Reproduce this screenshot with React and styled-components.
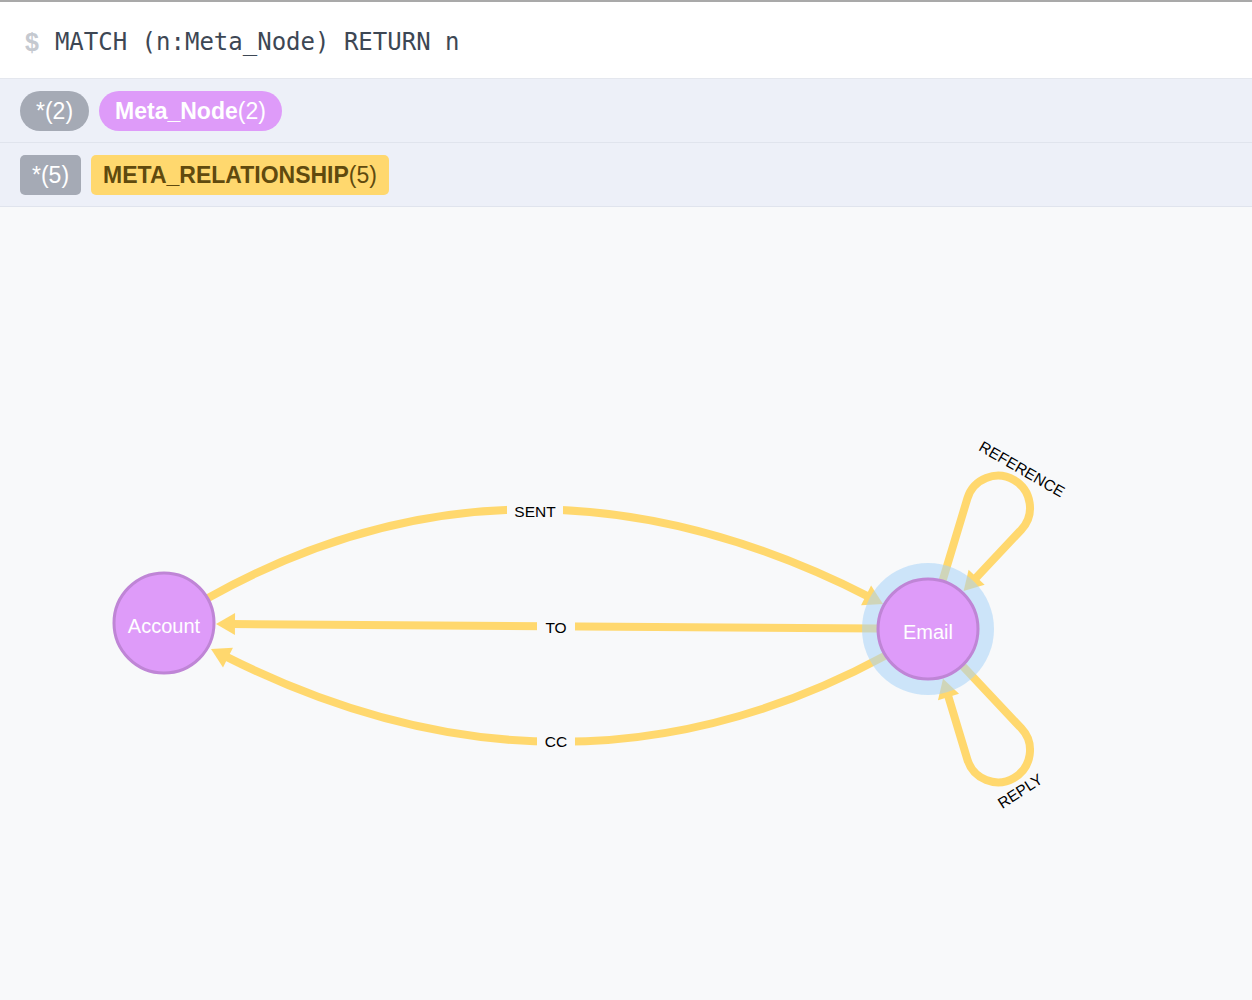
import styled, { createGlobalStyle } from 'styled-components';

const GlobalStyle = createGlobalStyle`
  html, body {
    margin: 0;
    padding: 0;
    background: #f8f9fa;
  }
  * {
    box-sizing: border-box;
  }
`;

const NODE_R = 50;
const ARROW_LEN = 19;
const ARROW_HALF = 11;

const nodes = {
  account: { x: 164, y: 624, label: 'Account' },
  email: { x: 928, y: 630, label: 'Email', selected: true },
};

const norm = (x, y) => {
  const l = Math.hypot(x, y);
  return [x / l, y / l];
};

const arrowPoints = (tx, ty, dx, dy) => {
  const bx = tx - dx * ARROW_LEN;
  const by = ty - dy * ARROW_LEN;
  const nx = -dy;
  const ny = dx;
  return `${tx},${ty} ${bx + nx * ARROW_HALF},${by + ny * ARROW_HALF} ${bx - nx * ARROW_HALF},${by - ny * ARROW_HALF}`;
};

// curved or straight edge between two nodes, label sits on the middle
function curveEdge(start, control, tip) {
  const [dx, dy] = norm(tip[0] - control[0], tip[1] - control[1]);
  const base = [tip[0] - dx * ARROW_LEN * 0.8, tip[1] - dy * ARROW_LEN * 0.8];
  return {
    d: `M${start[0]},${start[1]} Q${control[0]},${control[1]} ${base[0]},${base[1]}`,
    arrow: arrowPoints(tip[0], tip[1], dx, dy),
  };
}

// self loop drawn as a teardrop pointing at angle deg from the node
function loopEdge(node, deg, dist, r) {
  const t = (deg * Math.PI) / 180;
  const a = Math.asin(r / dist);
  const len = Math.sqrt(dist * dist - r * r);
  const u1 = [Math.cos(t - a), Math.sin(t - a)];
  const u2 = [Math.cos(t + a), Math.sin(t + a)];
  const start = [node.x + u1[0] * NODE_R, node.y + u1[1] * NODE_R];
  const p1 = [node.x + u1[0] * len, node.y + u1[1] * len];
  const p2 = [node.x + u2[0] * len, node.y + u2[1] * len];
  const tipR = NODE_R + 2;
  const tip = [node.x + u2[0] * tipR, node.y + u2[1] * tipR];
  const base = [tip[0] + u2[0] * ARROW_LEN * 0.8, tip[1] + u2[1] * ARROW_LEN * 0.8];
  return {
    d: `M${start[0]},${start[1]} L${p1[0]},${p1[1]} A${r},${r} 0 1 1 ${p2[0]},${p2[1]} L${base[0]},${base[1]}`,
    arrow: arrowPoints(tip[0], tip[1], -u2[0], -u2[1]),
  };
}

const edges = [
  { type: 'SENT', ...curveEdge([208, 599], [524, 422], [883, 605]), label: { x: 535, y: 512, w: 56 } },
  { type: 'TO', ...curveEdge([878, 629.5], [550, 627], [216, 625]), label: { x: 556, y: 628, w: 38 } },
  { type: 'CC', ...curveEdge([885.6, 656.5], [566, 829], [211, 650]), label: { x: 556, y: 742, w: 38 } },
  { type: 'REFERENCE', ...loopEdge(nodes.email, -60, 140, 32), label: { x: 1022, y: 470, rot: 30 } },
  { type: 'REPLY', ...loopEdge(nodes.email, 60, 140, 32), label: { x: 1020, y: 792, rot: -33 } },
];

export default function App() {
  return (
    <>
      <GlobalStyle />
      <Page>
        <QueryBar>
          <Prompt>$</Prompt>
          <Query>MATCH (n:Meta_Node) RETURN n</Query>
        </QueryBar>
        <LegendRow>
          <Pill $kind="all">*(2)</Pill>
          <Pill $kind="node">
            <b>Meta_Node</b>(2)
          </Pill>
        </LegendRow>
        <LegendRow>
          <Pill $kind="all" $square>*(5)</Pill>
          <Pill $kind="rel" $square>
            <b>META_RELATIONSHIP</b>(5)
          </Pill>
        </LegendRow>
        <GraphArea>
          <Graph width="1252" height="792" viewBox="0 208 1252 792">
            {edges.map((e) => (
              <g key={e.type}>
                <EdgeLine d={e.d} />
                <EdgeArrow points={e.arrow} />
              </g>
            ))}
            {edges.map((e) =>
              e.label.rot === undefined ? (
                <g key={e.type}>
                  <rect
                    x={e.label.x - e.label.w / 2}
                    y={e.label.y - 10}
                    width={e.label.w}
                    height={20}
                    fill="#f8f9fa"
                  />
                  <EdgeText x={e.label.x} y={e.label.y}>
                    {e.type}
                  </EdgeText>
                </g>
              ) : (
                <EdgeText
                  key={e.type}
                  x={e.label.x}
                  y={e.label.y}
                  transform={`rotate(${e.label.rot} ${e.label.x} ${e.label.y})`}
                >
                  {e.type}
                </EdgeText>
              )
            )}
            {Object.values(nodes).map((n) => (
              <g key={n.label}>
                {n.selected && <Halo cx={n.x} cy={n.y} r={66} />}
                <NodeCircle cx={n.x} cy={n.y} r={NODE_R} />
                <NodeText x={n.x} y={n.y + 3}>
                  {n.label}
                </NodeText>
              </g>
            ))}
          </Graph>
        </GraphArea>
      </Page>
    </>
  );
}

const Page = styled.div`
  width: 1252px;
  height: 1000px;
  display: flex;
  flex-direction: column;
  border-top: 2px solid #a9a9a9;
  background: #f8f9fa;
  overflow: hidden;
`;

const QueryBar = styled.div`
  height: 77px;
  flex: none;
  background: #ffffff;
  border-bottom: 1px solid #e4e7ee;
  display: flex;
  align-items: center;
  gap: 16px;
  padding: 4px 0 0 25px;
`;

const Prompt = styled.span`
  font-family: 'Liberation Sans', Arial, sans-serif;
  font-weight: 700;
  font-size: 25px;
  color: #c5c9d0;
`;

const Query = styled.span`
  font-family: 'DejaVu Sans Mono', 'Liberation Mono', monospace;
  font-size: 24px;
  color: #3d4754;
`;

const LegendRow = styled.div`
  height: 64px;
  flex: none;
  background: #edf0f8;
  border-bottom: 1px solid #e0e4ed;
  display: flex;
  align-items: center;
  gap: 10px;
  padding: 1px 20px 0;
`;

const pillColors = {
  all: { bg: '#a5aab5', fg: '#ffffff' },
  node: { bg: '#de9bf9', fg: '#ffffff' },
  rel: { bg: '#ffd86e', fg: '#604a0e' },
};

const Pill = styled.span`
  height: 40px;
  display: inline-flex;
  align-items: center;
  padding: 0 ${(p) => (p.$square ? '12px' : '16px')};
  border-radius: ${(p) => (p.$square ? '5px' : '20px')};
  background: ${(p) => pillColors[p.$kind].bg};
  color: ${(p) => pillColors[p.$kind].fg};
  font-family: 'Liberation Sans', Arial, sans-serif;
  font-size: 23px;
  white-space: nowrap;

  b {
    font-weight: 700;
  }
`;

const GraphArea = styled.div`
  flex: 1;
  background: #f8f9fa;
`;

const Graph = styled.svg`
  display: block;
`;

const EdgeLine = styled.path`
  fill: none;
  stroke: #ffd86e;
  stroke-width: 8;
`;

const EdgeArrow = styled.polygon`
  fill: #ffd86e;
`;

const EdgeText = styled.text`
  font-family: 'Liberation Sans', Arial, sans-serif;
  font-size: 15.5px;
  fill: #000000;
  text-anchor: middle;
  dominant-baseline: central;
`;

const Halo = styled.circle`
  fill: #a8d4f7;
  opacity: 0.55;
`;

const NodeCircle = styled.circle`
  fill: #de9bf9;
  stroke: #bf85d6;
  stroke-width: 3;
`;

const NodeText = styled.text`
  font-family: 'Liberation Sans', Arial, sans-serif;
  font-size: 20px;
  fill: #ffffff;
  text-anchor: middle;
  dominant-baseline: central;
`;
